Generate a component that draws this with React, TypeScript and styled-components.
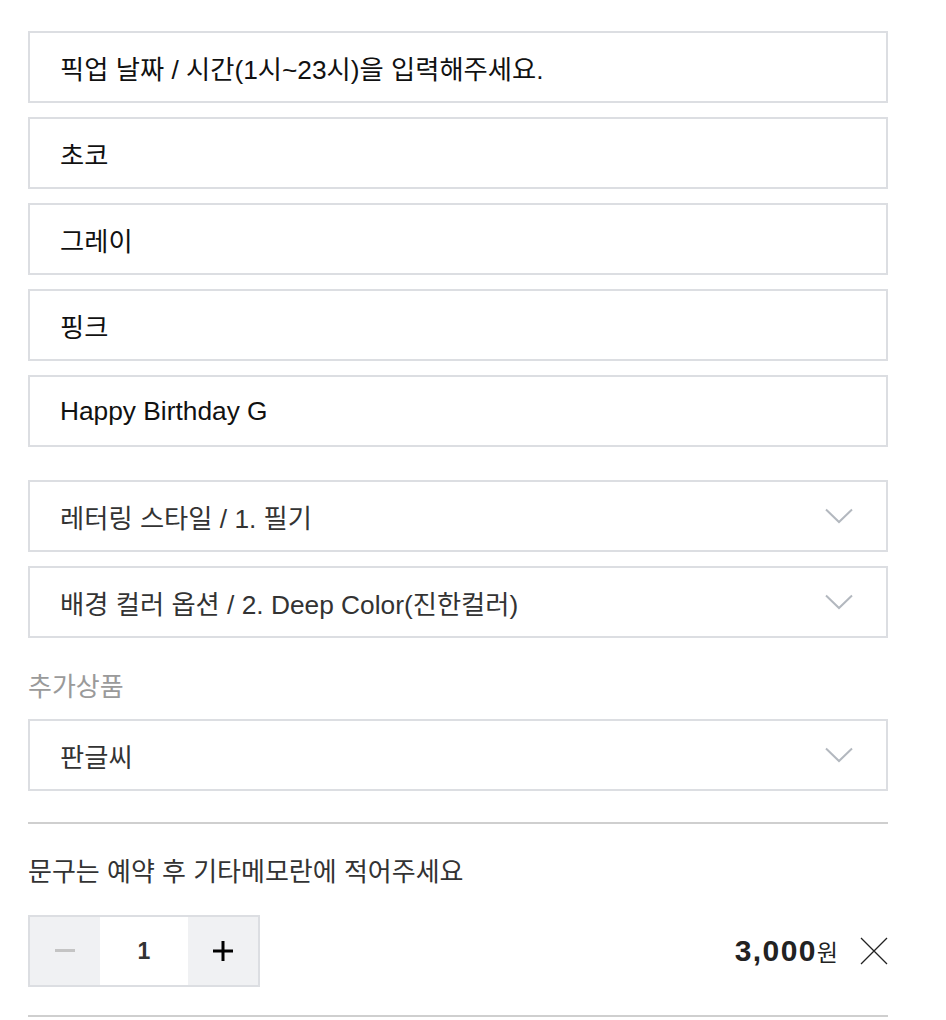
import React from "react";
import styled, { createGlobalStyle } from "styled-components";

const Global = createGlobalStyle`
  html, body { margin: 0; padding: 0; background: #fff; }
  body { font-family: "Liberation Sans", "Noto Sans CJK KR", sans-serif; color: #111; }
`;

const Page = styled.div`
  width: 860px;
  padding: 31px 0 0 28px;
  display: flex;
  flex-direction: column;
`;

const Group = styled.div<{ $gap?: number; $mb?: number }>`
  display: flex;
  flex-direction: column;
  gap: ${(p) => p.$gap ?? 14}px;
  margin-bottom: ${(p) => p.$mb ?? 0}px;
`;

const Field = styled.div`
  box-sizing: border-box;
  height: 72px;
  border: 2px solid #dcdee2;
  display: flex;
  align-items: center;
  padding: 0 30px;
  font-size: 26.3px;
  color: #111;
`;

const SelectField = styled(Field)`
  justify-content: space-between;
  color: #333;
  padding-right: 33px;
`;

const Label = styled.div`
  font-size: 26px;
  color: #9a9a9a;
  line-height: 30px;
  margin: 34px 0 17px;
`;

const Divider = styled.div`
  height: 2px;
  background: #cfcfcf;
`;

const Note = styled.div`
  font-size: 26px;
  color: #333;
  line-height: 30px;
  margin: 33px 0 28px;
`;

const Row = styled.div`
  display: flex;
  align-items: center;
  justify-content: space-between;
  margin-bottom: 28px;
`;

const Qty = styled.div`
  box-sizing: border-box;
  display: flex;
  width: 232px;
  height: 72px;
  border: 2px solid #dcdee2;
`;

const QtyBtn = styled.div`
  width: 70px;
  background: #f0f1f3;
  display: flex;
  align-items: center;
  justify-content: center;
`;

const QtyNum = styled.div`
  flex: 1;
  display: flex;
  align-items: center;
  justify-content: center;
  font-size: 23px;
  font-weight: bold;
  color: #333;
`;

const PriceWrap = styled.div`
  display: flex;
  align-items: center;
  gap: 22px;
`;

const Price = styled.div`
  font-size: 30px;
  font-weight: bold;
  color: #222;
  letter-spacing: 1.4px;
`;

const Won = styled.span`
  font-size: 23px;
  font-weight: normal;
  letter-spacing: 0;
  margin-left: 0;
`;

const Chevron = () => (
  <svg width="28" height="16" viewBox="0 0 28 16">
    <polyline points="1,1.5 14,14 27,1.5" fill="none" stroke="#b3b8bf" strokeWidth="2" />
  </svg>
);

const XIcon = () => (
  <svg width="28" height="28" viewBox="0 0 28 28">
    <path d="M1 1 L27 27 M27 1 L1 27" stroke="#222" strokeWidth="1.3" fill="none" />
  </svg>
);

const Minus = () => (
  <svg width="20" height="4" viewBox="0 0 20 4">
    <rect x="0" y="0" width="20" height="3" fill="#c4c4c4" />
  </svg>
);

const Plus = () => (
  <svg width="20" height="20" viewBox="0 0 20 20">
    <rect x="0" y="8.5" width="20" height="3" fill="#000" />
    <rect x="8.5" y="0" width="3" height="20" fill="#000" />
  </svg>
);

export default function App() {
  const inputs = ["픽업 날짜 / 시간(1시~23시)을 입력해주세요.", "초코", "그레이", "핑크", "Happy Birthday G"];
  const selects = ["레터링 스타일 / 1. 필기", "배경 컬러 옵션 / 2. Deep Color(진한컬러)"];
  return (
    <>
      <Global />
      <Page>
        <Group $mb={33}>
          {inputs.map((t) => (
            <Field key={t}>{t}</Field>
          ))}
        </Group>
        <Group>
          {selects.map((t) => (
            <SelectField key={t}>
              <span>{t}</span>
              <Chevron />
            </SelectField>
          ))}
        </Group>
        <Label>추가상품</Label>
        <Group $mb={31}>
          <SelectField>
            <span>판글씨</span>
            <Chevron />
          </SelectField>
        </Group>
        <Divider />
        <Note>문구는 예약 후 기타메모란에 적어주세요</Note>
        <Row>
          <Qty>
            <QtyBtn>
              <Minus />
            </QtyBtn>
            <QtyNum>1</QtyNum>
            <QtyBtn>
              <Plus />
            </QtyBtn>
          </Qty>
          <PriceWrap>
            <Price>
              3,000<Won>원</Won>
            </Price>
            <XIcon />
          </PriceWrap>
        </Row>
        <Divider />
      </Page>
    </>
  );
}
